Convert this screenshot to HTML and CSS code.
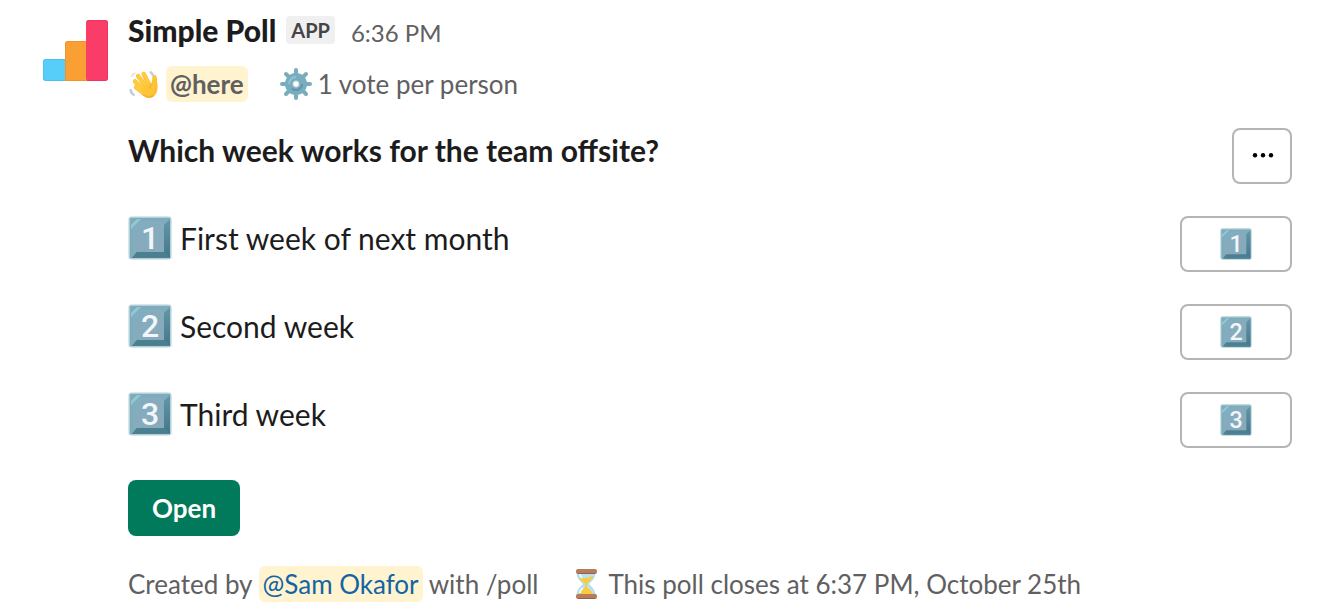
FILE: index.html
```html
<!DOCTYPE html>
<html lang="en">
<head>
    <meta charset="UTF-8">
    <meta name="viewport" content="width=device-width, initial-scale=1.0">
    <title>Simple Poll</title>
    <link rel="stylesheet" href="styles.css">
</head>
<body>
    <!-- Shared shapes -->
    <svg class="defs" aria-hidden="true">
        <defs>
            <linearGradient id="face" x1="0" y1="0" x2="1" y2="1">
                <stop offset="0" stop-color="#7fb0c1"/>
                <stop offset="0.4" stop-color="#85abbc"/>
                <stop offset="1" stop-color="#88aabb"/>
            </linearGradient>
            <linearGradient id="side" x1="0" y1="0" x2="0" y2="1">
                <stop offset="0" stop-color="#6297a8"/>
                <stop offset="1" stop-color="#437789"/>
            </linearGradient>
            <linearGradient id="skin" x1="0" y1="0" x2="1" y2="1">
                <stop offset="0" stop-color="#ffd04a"/>
                <stop offset="1" stop-color="#fbb827"/>
            </linearGradient>
            <symbol id="key" viewBox="0 0 44 44">
                <rect x="0.5" y="0.5" width="43" height="43" rx="3" fill="#b3cfd7"/>
                <rect x="2" y="2" width="40" height="40" rx="1" fill="#7dacbc"/>
                <path d="M3 9L9 3H13L3 13Z" fill="#98c5d3"/>
                <path d="M42 3V42H4L9 36H36V9Z" fill="url(#side)"/>
                <path d="M4 42L9 36H36L42 42Z" fill="#4b8091"/>
                <path d="M12 5H33L36 9V36H5V12Z" fill="url(#face)"/>
            </symbol>
        </defs>
    </svg>

    <main class="message">
        <svg class="avatar" viewBox="0 0 72 72" role="img" aria-label="Simple Poll logo">
            <rect x="3" y="43" width="24" height="22" rx="3" fill="#57cdfa"/>
            <path d="M25 65V28a3 3 0 0 1 3-3h20v40z" fill="#fa9f33"/>
            <rect x="46" y="4" width="22" height="61" rx="3" fill="#fa3c69"/>
            <path d="M47 5.500Q47 4.500 49 4.500H65Q67.500 4.500 67.500 7V62Q67.500 64.500 65 64.500H47" fill="none" stroke="#ec345f"/>
            <path d="M25.500 64V28Q25.500 25.500 28 25.500H46M26 64.500H46" fill="none" stroke="#ee942c"/>
            <path d="M25 43.500H6Q3.500 43.500 3.500 46V62Q3.500 64.500 6 64.500H25" fill="none" stroke="#4bc1ef"/>
        </svg>

        <div class="content">
            <header class="title">
                <strong class="name">Simple Poll</strong>
                <span class="badge">APP</span>
                <time class="time">6:36 PM</time>
            </header>

            <div class="context">
                <span class="item">
                    <svg class="emoji" viewBox="0 0 96 96" role="img" aria-label="wave">
                        <path d="M8 66Q9 76 17 80M68 13Q75 17 77 26" fill="none" stroke="#c6d0da" stroke-width="8" stroke-linecap="round"/>
                        <path d="M12 24Q14 18 20 16" fill="none" stroke="#dfe4e8" stroke-width="6" stroke-linecap="round"/>
                        <path d="M38 62L50 38L71 46L73 30Q75 20 81 21Q88 23 87 39Q91 62 85 75Q78 90 62 90Q50 89 40 77Z" fill="url(#skin)"/>
                        <g fill="none" stroke-linecap="round">
                            <path d="M48 77L24 58M50 67L21 40M57 59L30 24M66 54L47 18" stroke="#f6b832" stroke-width="13"/>
                            <path d="M48 76L24 57M50 66L21 39M57 58L30 23M66 53L47 17" stroke="#ffcb40" stroke-width="11"/>
                        </g>
                        <path d="M47 54L64 46L77 50L80 67L68 83L50 79L40 66Z" fill="#fdc437"/>
                        <path d="M72 47Q64 52 66 62" fill="none" stroke="#efae2d" stroke-width="3" stroke-linecap="round"/>
                        <path d="M44 80Q60 93 76 84" fill="none" stroke="#f0a928" stroke-width="3" stroke-linecap="round"/>
                    </svg>
                    <span class="mention here">@here</span>
                </span>
                <span class="item">
                    <svg class="emoji" viewBox="0 0 32 32" role="img" aria-label="gear">
                        <path d="M16 2V9M16 23V30M2 16H9M23 16H30M6 6L11 11M21 21L26 26M26 6L21 11M6 26L11 21" fill="none" stroke="#7aacbf" stroke-width="4" stroke-linecap="round"/>
                        <circle cx="16" cy="16" r="7" fill="none" stroke="#78adbf" stroke-width="8"/>
                        <path d="M9 16A7 7 0 0 1 16 9" fill="none" stroke="#94c1cf" stroke-width="2"/>
                        <path d="M22 16A6 6 0 0 1 12 20.500" fill="none" stroke="#5f96aa" stroke-width="2"/>
                        <circle cx="16" cy="16" r="3.200" fill="#fff" stroke="#a9cbd6"/>
                    </svg>
                    1 vote per person
                </span>
            </div>

            <section class="poll">
                <div class="row">
                    <h1 class="question">Which week works for the team offsite?</h1>
                    <button class="button more" type="button" aria-label="More options">
                        <svg class="dots" viewBox="0 0 24 6" aria-hidden="true">
                            <circle cx="5" cy="2.200" r="2.200"/>
                            <circle cx="13" cy="2.200" r="2.200"/>
                            <circle cx="21" cy="2.200" r="2.200"/>
                        </svg>
                    </button>
                </div>
                <div class="row">
                    <p class="option">
                        <svg class="keycap" viewBox="0 0 44 44"><use href="#key"/><text class="digit" x="22" y="33">1</text></svg>
                        First week of next month
                    </p>
                    <button class="button vote" type="button" aria-label="Vote for first week of next month">
                        <svg class="keycap small" viewBox="0 0 44 44"><use href="#key"/><text class="digit" x="22" y="33">1</text></svg>
                    </button>
                </div>
                <div class="row">
                    <p class="option">
                        <svg class="keycap" viewBox="0 0 44 44"><use href="#key"/><text class="digit" x="22" y="33">2</text></svg>
                        Second week
                    </p>
                    <button class="button vote" type="button" aria-label="Vote for second week">
                        <svg class="keycap small" viewBox="0 0 44 44"><use href="#key"/><text class="digit" x="22" y="33">2</text></svg>
                    </button>
                </div>
                <div class="row">
                    <p class="option">
                        <svg class="keycap" viewBox="0 0 44 44"><use href="#key"/><text class="digit" x="22" y="33">3</text></svg>
                        Third week
                    </p>
                    <button class="button vote" type="button" aria-label="Vote for third week">
                        <svg class="keycap small" viewBox="0 0 44 44"><use href="#key"/><text class="digit" x="22" y="33">3</text></svg>
                    </button>
                </div>
                <button class="button open" type="button">Open</button>
            </section>

            <footer class="context">
                <span>Created by <a class="mention" href="#">@Sam Okafor</a> with /poll</span>
                <span class="item">
                    <svg class="emoji" viewBox="0 0 32 32" role="img" aria-label="hourglass">
                        <path d="M7 4H25Q25 11 18 16Q25 21 25 28H7Q7 21 14 16Q7 11 7 4Z" fill="#b9e2ef" stroke="#a9d5e3"/>
                        <path d="M9 10Q17 11 23 8Q22 12 17 15V20Q22 22 23 27H9Q10 22 15 20V15Q11 13 9 10Z" fill="#fbcb38"/>
                        <path d="M10 6Q10 8 12 10M10 25Q10 22 13 20" fill="none" stroke="#e9f8fc" stroke-width="2"/>
                        <rect x="6" y="1" width="21" height="5" rx="2" fill="#b67c5d"/>
                        <rect x="6" y="26" width="21" height="5" rx="2" fill="#b67c5d"/>
                        <path d="M8 5.500H25M8 30.500H25" stroke="#93614b"/>
                    </svg>
                    This poll closes at 6:37 PM, October 25th
                </span>
            </footer>
        </div>
    </main>
</body>
</html>
```

FILE: styles.css
```css
* {
    box-sizing: border-box;
}

body {
    margin: 0;
    background-color: #ffffff;
    color: #1d1c1d;
    font-family: Lato, sans-serif;
    font-size: 30px;
    line-height: 44px;
}

.defs {
    position: absolute;
    width: 0;
    height: 0;
}

.message {
    display: flex;
    align-items: flex-start;
    gap: 16px;
    padding: 8px 32px 8px 40px;
}

.avatar {
    flex: none;
    width: 72px;
    height: 72px;
    margin-top: 8px;
}

.content {
    flex: 1;
    min-width: 0;
}

.title {
    display: flex;
    align-items: baseline;
    height: 46px;
}

.name {
    font-weight: 900;
}

.badge {
    align-self: flex-start;
    margin: 8px 16px 0 10px;
    padding: 0 5px;
    border-radius: 4px;
    background-color: #f0f0f0;
    color: #454447;
    font-size: 20px;
    font-weight: 700;
    line-height: 28px;
}

.time {
    color: #616061;
    font-size: 24px;
}

.context {
    display: flex;
    flex-wrap: wrap;
    align-items: center;
    gap: 0 32px;
    margin-top: 12px;
    color: #616061;
    font-size: 26px;
    line-height: 36px;
}

.item {
    display: flex;
    align-items: center;
    gap: 6px;
}

.emoji {
    flex: none;
    width: 32px;
    height: 32px;
}

.mention {
    display: inline-block;
    padding: 0 4px;
    border-radius: 6px;
    background-color: #fff3d0;
    color: #1264a3;
    text-decoration: none;
}

.here {
    color: #616061;
    font-weight: 700;
}

.poll {
    display: flex;
    flex-direction: column;
    align-items: stretch;
    gap: 32px;
    margin: 26px 0 30px;
}

.row {
    display: flex;
    align-items: flex-start;
    justify-content: space-between;
    gap: 32px;
}

.question {
    margin: 0;
    font-size: 30px;
    font-weight: 700;
}

.option {
    display: flex;
    gap: 8px;
    margin: 0;
}

.keycap {
    flex: none;
    width: 44px;
    height: 44px;
}

.small {
    width: 32px;
    height: 32px;
}

.digit {
    fill: #f1f6fb;
    font-family: Roboto, sans-serif;
    font-size: 32px;
    font-weight: 500;
    text-anchor: middle;
}

.button {
    display: flex;
    flex: none;
    align-items: center;
    justify-content: center;
    height: 56px;
    padding: 0;
    border: 2px solid #b5b5b5;
    border-radius: 8px;
    background-color: #ffffff;
    color: #1d1c1d;
    font-family: inherit;
    cursor: pointer;
}

.more {
    width: 60px;
}

.dots {
    width: 24px;
    height: 6px;
}

.vote {
    width: 112px;
}

.open {
    align-self: flex-start;
    width: 112px;
    border: none;
    background-color: #007a5a;
    color: #ffffff;
    font-size: 26px;
    font-weight: 700;
}
```
